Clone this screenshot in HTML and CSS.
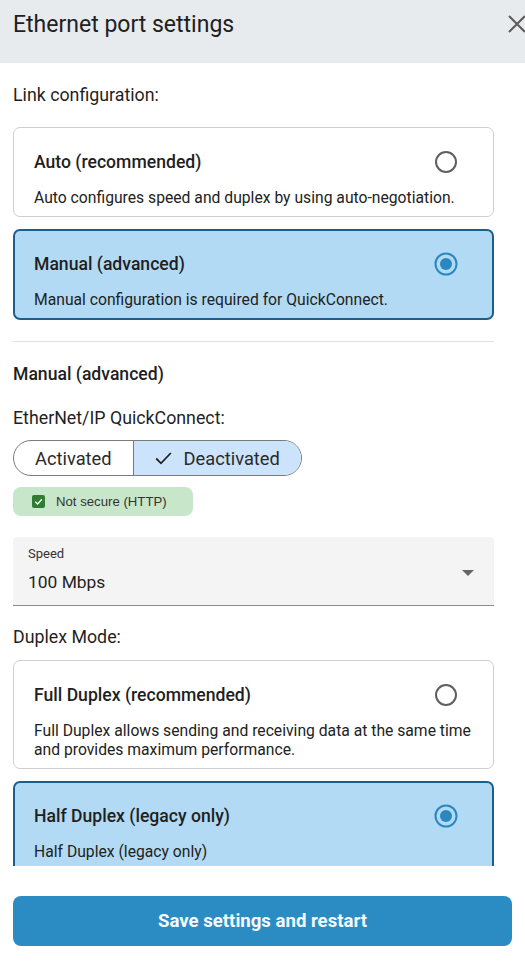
FILE: index.html
```html
<!DOCTYPE html>
<html lang="en">
<head>
  <meta charset="UTF-8">
  <title>Ethernet port settings</title>
  <link rel="stylesheet" href="styles.css">
</head>
<body>
  <div class="dialog">

    <div class="dialog-header">
      <h2 class="dialog-title">Ethernet port settings</h2>
      <svg class="close-icon" width="18" height="18" viewBox="0 0 18 18">
        <path d="M1 1 L17 17 M17 1 L1 17" stroke="#5a5a5a" stroke-width="2" fill="none"/>
      </svg>
    </div>

    <div class="dialog-body">
      <div class="field-label">Link configuration:</div>

      <div class="option">
        <div class="option-head">
          <span class="option-title">Auto (recommended)</span>
          <svg class="radio" width="24" height="24" viewBox="0 0 24 24">
            <circle cx="12" cy="12" r="10" stroke="#5f5f5f" stroke-width="2" fill="none"/>
          </svg>
        </div>
        <div class="option-desc">Auto configures speed and duplex by using auto-negotiation.</div>
      </div>

      <div class="option selected">
        <div class="option-head">
          <span class="option-title">Manual (advanced)</span>
          <svg class="radio" width="24" height="24" viewBox="0 0 24 24">
            <circle cx="12" cy="12" r="10.5" stroke="#2b87c0" stroke-width="2" fill="none"/>
            <circle cx="12" cy="12" r="6" fill="#2b87c0"/>
          </svg>
        </div>
        <div class="option-desc">Manual configuration is required for QuickConnect.</div>
      </div>

      <hr class="divider">

      <div class="section-title">Manual (advanced)</div>

      <div class="field-label quick">EtherNet/IP QuickConnect:</div>

      <div class="toggle">
        <div class="toggle-item">Activated</div>
        <div class="toggle-item active">
          <svg width="17" height="14" viewBox="0 0 17 14">
            <path d="M1.2 7.5 L6 12.3 L15.8 2" stroke="#222" stroke-width="1.8" fill="none"/>
          </svg>
          Deactivated
        </div>
      </div>

      <div class="chip">
        <span class="chip-box">
          <svg width="13" height="13" viewBox="0 0 13 13">
            <path d="M3.2 6.6 L5.6 9 L9.8 4.2" stroke="#fff" stroke-width="1.3" fill="none"/>
          </svg>
        </span>
        Not secure (HTTP)
      </div>

      <div class="select">
        <div class="select-label">Speed</div>
        <div class="select-value">100 Mbps</div>
        <span class="select-arrow"></span>
      </div>

      <div class="field-label duplex">Duplex Mode:</div>

      <div class="option">
        <div class="option-head">
          <span class="option-title">Full Duplex (recommended)</span>
          <svg class="radio" width="24" height="24" viewBox="0 0 24 24">
            <circle cx="12" cy="12" r="10" stroke="#5f5f5f" stroke-width="2" fill="none"/>
          </svg>
        </div>
        <div class="option-desc">Full Duplex allows sending and receiving data at the same time and provides maximum performance.</div>
      </div>

      <div class="option selected">
        <div class="option-head">
          <span class="option-title">Half Duplex (legacy only)</span>
          <svg class="radio" width="24" height="24" viewBox="0 0 24 24">
            <circle cx="12" cy="12" r="10.5" stroke="#2b87c0" stroke-width="2" fill="none"/>
            <circle cx="12" cy="12" r="6" fill="#2b87c0"/>
          </svg>
        </div>
        <div class="option-desc">Half Duplex (legacy only)</div>
      </div>
    </div>

    <div class="dialog-footer">
      <button class="save-btn">Save settings and restart</button>
    </div>

  </div>
</body>
</html>
```

FILE: styles.css
```css
body {
  margin: 0;
  font-family: Roboto, "Liberation Sans", sans-serif;
  color: #1f1f1f;
  background: #fff;
}
.dialog {
  display: flex;
  flex-direction: column;
  height: 961px;
  overflow: hidden;
}
.dialog-header {
  height: 63px;
  flex-shrink: 0;
  background: #e8ebee;
  display: flex;
  align-items: flex-start;
  padding: 9px 0 0 13px;
  box-sizing: border-box;
  overflow: hidden;
}
.dialog-title {
  margin: 0;
  font-size: 23px;
  font-weight: 400;
  line-height: 32px;
  color: #202020;
}
.close-icon {
  margin-left: auto;
  margin-right: -1px;
  margin-top: 6px;
  flex-shrink: 0;
}
.dialog-body {
  flex: 1;
  overflow: hidden;
  padding: 20px 31px 0 13px;
}
.field-label {
  font-size: 17.8px;
  line-height: 24px;
  margin-bottom: 20px;
}
.field-label.quick {
  margin-bottom: 10px;
}
.field-label.duplex {
  margin-bottom: 11px;
}
.option {
  border: 1px solid #cfcfcf;
  border-radius: 7px;
  padding: 22px 20px 9px 20px;
  margin-bottom: 12px;
}
.option.selected {
  background: #b2daf4;
  border: 2px solid #1d5f8c;
  padding: 21px 19px 9px 19px;
  margin-bottom: 0;
}
.option-head {
  display: flex;
  align-items: center;
  justify-content: space-between;
  padding-right: 15px;
  margin-bottom: 14px;
}
.option-title {
  font-size: 17.6px;
  font-weight: 500;
  line-height: 24px;
}
.option-desc {
  font-size: 15.7px;
  line-height: 19px;
  color: #222;
}
.divider {
  border: none;
  border-top: 1px solid #e2e2e2;
  margin: 21px 0 20px 0;
}
.section-title {
  font-size: 17.6px;
  font-weight: 500;
  line-height: 24px;
  margin-bottom: 20px;
}
.toggle {
  display: inline-flex;
  height: 36px;
  border: 1px solid #7a7a7a;
  border-radius: 18px;
  overflow: hidden;
  box-sizing: border-box;
  margin-bottom: 11px;
}
.toggle-item {
  display: flex;
  align-items: center;
  gap: 12px;
  font-size: 18.3px;
  color: #2a2a2a;
  padding: 0 21px;
}
.toggle-item.active {
  background: #cce4fb;
  border-left: 1px solid #7a7a7a;
  padding: 0 21px 0 21px;
}
.chip {
  display: flex;
  align-items: center;
  gap: 11px;
  width: 180px;
  height: 29px;
  box-sizing: border-box;
  padding-left: 19px;
  background: #c8e6c9;
  border-radius: 8px;
  font-family: "Liberation Sans", Arial, sans-serif;
  font-size: 13.2px;
  color: #333;
  margin-bottom: 21px;
}
.chip-box {
  display: flex;
  width: 13px;
  height: 13px;
  background: #2e7d32;
  border-radius: 2px;
}
.select {
  position: relative;
  height: 69px;
  box-sizing: border-box;
  background: #f4f4f4;
  border-bottom: 1px solid #8a8a8a;
  border-radius: 4px 4px 0 0;
  padding: 9px 15px 0 15px;
  margin-bottom: 19px;
}
.select-label {
  font-size: 13px;
  line-height: 16px;
  color: #333;
}
.select-value {
  font-size: 17.4px;
  line-height: 24px;
  margin-top: 8px;
}
.select-arrow {
  position: absolute;
  right: 20px;
  top: 33px;
  border-left: 6px solid transparent;
  border-right: 6px solid transparent;
  border-top: 6px solid #666;
}
.dialog-footer {
  flex-shrink: 0;
  height: 95px;
  box-sizing: border-box;
  padding: 30px 13px 0 13px;
}
.save-btn {
  width: 100%;
  height: 50px;
  border: none;
  border-radius: 8px;
  background: #2b8cc4;
  color: #f4faff;
  font-family: Roboto, "Liberation Sans", sans-serif;
  font-size: 18.6px;
  font-weight: 700;
  cursor: pointer;
}
```
